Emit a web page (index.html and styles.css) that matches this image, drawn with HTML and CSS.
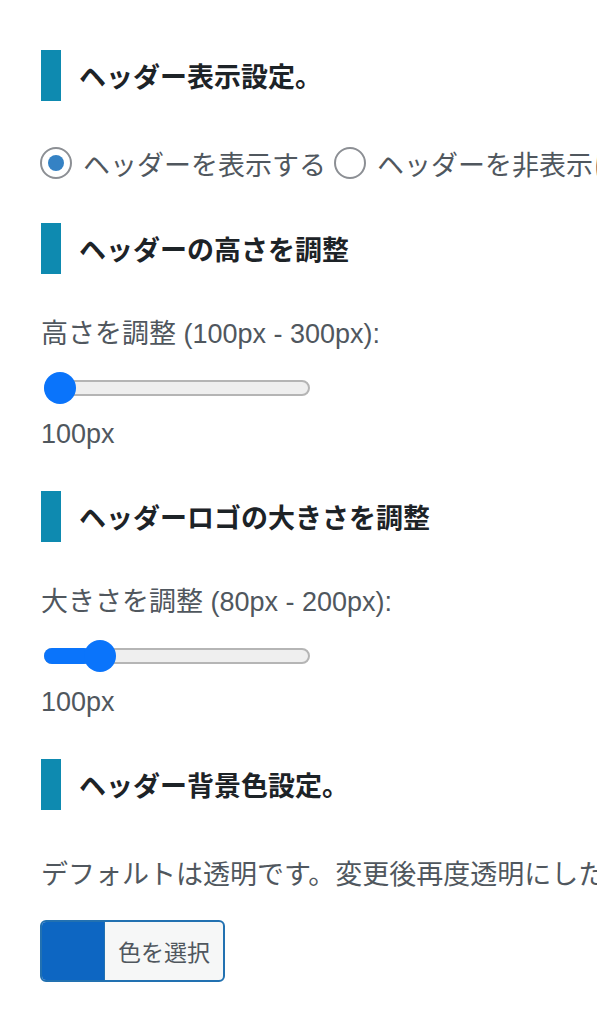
FILE: index.html
```html
<!DOCTYPE html>
<html>

<head>
    <meta charset="utf-8">
    <link rel="stylesheet" href="styles.css">
    <title>ヘッダー設定</title>
</head>

<body>
    <div class="settings">
        <h2 class="section-title">ヘッダー表示設定。</h2>
        <div class="radio-row">
            <label class="radio">
                <input type="radio" name="header_display" value="show" checked> ヘッダーを表示する
            </label>
            <label class="radio">
                <input type="radio" name="header_display" value="hide"> ヘッダーを非表示にする
            </label>
        </div>

        <h2 class="section-title">ヘッダーの高さを調整</h2>
        <p class="field-label">高さを調整 (100px - 300px):</p>
        <div class="range">
            <div class="range-fill" style="width: 0px;"></div>
            <div class="range-thumb" style="left: 0px;"></div>
        </div>
        <p class="range-value">100px</p>

        <h2 class="section-title">ヘッダーロゴの大きさを調整</h2>
        <p class="field-label">大きさを調整 (80px - 200px):</p>
        <div class="range">
            <div class="range-fill" style="width: 48px;"></div>
            <div class="range-thumb" style="left: 40px;"></div>
        </div>
        <p class="range-value">100px</p>

        <h2 class="section-title">ヘッダー背景色設定。</h2>
        <p class="description">デフォルトは透明です。変更後再度透明にしたい場合はクリアボタンを押してください。</p>
        <button type="button" class="color-button">
            <span class="color-swatch"></span>
            <span class="color-text">色を選択</span>
        </button>
    </div>
</body>

</html>
```

FILE: styles.css
```css
body {
    margin: 0;
    padding: 0;
    background-color: #fff;
    font-family: "Liberation Sans", "Noto Sans CJK JP", sans-serif;
    color: #50575e;
    overflow: hidden;
}

.settings {
    padding: 50px 0 0 41px;
    white-space: nowrap;
}

.section-title {
    display: flex;
    align-items: center;
    gap: 18px;
    height: 51px;
    margin: 0;
    font-size: 27px;
    font-weight: bold;
    color: #1d2327;
}

.section-title::before {
    content: "";
    width: 20px;
    height: 100%;
    background-color: #0e8ab0;
}

.radio-row {
    display: flex;
    align-items: center;
    gap: 8px;
    height: 40px;
    margin: 42px 0 40px -1px;
    font-size: 27px;
}

.radio {
    display: flex;
    align-items: center;
    gap: 11px;
}

.radio input {
    appearance: none;
    width: 32px;
    height: 32px;
    margin: 0;
    border: 2px solid #8c8f94;
    border-radius: 50%;
    background-color: #fff;
    display: flex;
    align-items: center;
    justify-content: center;
}

.radio input:checked::before {
    content: "";
    width: 16px;
    height: 16px;
    border-radius: 50%;
    background-color: #3582c4;
}

.field-label {
    margin: 42px 0 0;
    font-size: 27px;
    line-height: 36px;
}

.range {
    position: relative;
    width: 266px;
    height: 32px;
    margin: 20px 0 0 3px;
}

.range::before {
    content: "";
    position: absolute;
    left: 0;
    right: 0;
    top: 8px;
    height: 16px;
    box-sizing: border-box;
    border: 2px solid #b5b5b5;
    border-radius: 8px;
    background-color: #efefef;
}

.range-fill {
    position: absolute;
    left: 0;
    top: 8px;
    height: 16px;
    border-radius: 8px;
    background-color: #0a74fb;
}

.range-thumb {
    position: absolute;
    top: 0;
    width: 32px;
    height: 32px;
    border-radius: 50%;
    background-color: #0a74fb;
}

.range-value {
    margin: 12px 0 39px;
    font-size: 27px;
    line-height: 36px;
}

.description {
    margin: 47px 0 0;
    font-size: 27px;
    line-height: 36px;
}

.color-button {
    display: flex;
    width: 185px;
    height: 62px;
    margin: 27px 0 0 -1px;
    padding: 0;
    border: 2px solid #2271b1;
    border-radius: 6px;
    overflow: hidden;
    background-color: #f6f7f7;
    font-family: inherit;
    cursor: pointer;
}

.color-swatch {
    width: 62px;
    height: 100%;
    background-color: #0d66c2;
}

.color-text {
    flex: 1;
    display: flex;
    align-items: center;
    justify-content: center;
    border-left: 1px solid #2271b1;
    font-size: 23px;
    color: #50575e;
}
```
